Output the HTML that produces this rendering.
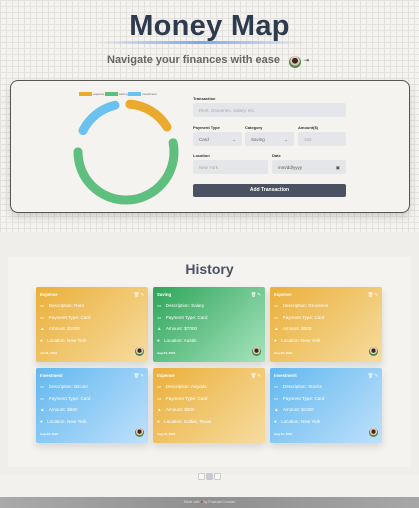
<!DOCTYPE html>
<html><head><style>
*{box-sizing:border-box;margin:0;padding:0}
body{width:419px;height:508px;overflow:hidden;font-family:"Liberation Sans",sans-serif;background:#f2f1ee;position:relative}
.grid{position:absolute;left:0;top:0;width:419px;height:232px;background-color:#f4f3ef;background-image:linear-gradient(#e4e2de 1px,transparent 1px),linear-gradient(90deg,#e4e2de 1px,transparent 1px);background-size:6px 6px}
h1{position:absolute;top:10px;left:0;width:419px;text-align:center;font-size:29px;color:#2e3a4d;font-weight:bold;letter-spacing:0.3px}
.glow{position:absolute;left:95px;top:41px;width:210px;height:3px;border-radius:2px;background:linear-gradient(90deg,transparent,#7aa8ee,transparent)}
.sub{position:absolute;top:54px;left:107px;font-size:11px;font-weight:bold;color:#666;white-space:nowrap}
.av{position:absolute;width:12px;height:12px;border-radius:50%;background:radial-gradient(circle at 50% 40%,#3a2a22 30%,#e9c9b5 32%,#e9c9b5 50%,#4e8a4c 52%)}
.main{position:absolute;left:10px;top:80px;width:400px;height:133px;border:1px solid #555;border-radius:8px;background:#f4f3f0;box-shadow:0 4px 8px rgba(0,0,0,.15)}
.lbl{position:absolute;font-size:4px;font-weight:bold;color:#333}
.inp{position:absolute;background:#e5e6e9;border-radius:2px;font-size:4.5px;color:#aaa;padding:5px 6px}
.btn{position:absolute;left:193px;top:184px;width:153px;height:13px;background:#4a5261;border-radius:2px;color:#fff;font-size:5px;font-weight:bold;text-align:center;line-height:13px}
.hist{position:absolute;left:0;top:232px;width:419px;height:243px;background:#efeeeb}
.panel{position:absolute;left:8px;top:257px;width:403px;height:210px;background:#f4f3f0}
h2{position:absolute;top:261px;left:0;width:419px;text-align:center;font-size:14px;color:#4a5261}
.card{position:absolute;width:112px;height:75px;border-radius:2px;color:#fff;font-size:4.3px;box-shadow:0 4px 8px rgba(0,0,0,.12)}
.exp{background:linear-gradient(135deg,#ebaf3a,#f6dca0)}
.sav{background:linear-gradient(135deg,#2ea55a,#a7e3bd)}
.inv{background:linear-gradient(135deg,#62b8ef,#bfe0fb)}
.card .t{position:absolute;left:4px;top:5px;font-weight:bold}
.card .ic{position:absolute;right:4px;top:5px}
.card .r{position:absolute;left:4px;font-size:4.6px}
.card .r b{margin-left:3px;font-weight:normal}
.card .d{position:absolute;left:4px;top:64px;font-size:3px;font-weight:bold}
.card .av{left:99px;top:60px;width:9px;height:9px}
.pg{position:absolute;top:473px;width:7px;height:7px;border:1px solid #ccc;border-radius:1px;background:#f7f7f7}
.foot{position:absolute;left:0;top:497px;width:419px;height:11px;background:linear-gradient(90deg,#aaa,#8f8f8f,#a7a7a7);font-size:3.5px;color:#ddd;text-align:center;line-height:11px}
</style></head><body>
<div class="grid"></div>
<div class="glow"></div>
<h1>Money Map</h1>
<div class="sub">Navigate your finances with ease</div>
<div class="av" style="left:289px;top:56px"></div>
<div style="position:absolute;left:304px;top:57px;font-size:6px;color:#444">⇥</div>
<div class="main"></div>
<div style="position:absolute;left:79px;top:92px;font-size:3px;color:#666;white-space:nowrap"><span style="display:inline-block;width:13px;height:4px;background:#ebaa2e;vertical-align:middle"></span> expense <span style="display:inline-block;width:13px;height:4px;background:#5fbf7f;vertical-align:middle"></span> saving <span style="display:inline-block;width:13px;height:4px;background:#6cc2ef;vertical-align:middle"></span> investment</div>
<svg style="position:absolute;left:70px;top:96px" width="112" height="112" viewBox="0 0 112 112">
<g fill="none" stroke-width="9" stroke-linecap="round" transform="rotate(-90 56 56)">
<circle cx="56" cy="56" r="48" stroke="#ebaa2e" stroke-dasharray="45 257" stroke-dashoffset="-4"/>
<circle cx="56" cy="56" r="48" stroke="#5fbf7f" stroke-dasharray="160 142" stroke-dashoffset="-66"/>
<circle cx="56" cy="56" r="48" stroke="#6cc2ef" stroke-dasharray="42 260" stroke-dashoffset="-248"/>
</g></svg>
<div class="lbl" style="left:193px;top:96px">Transaction</div>
<div class="inp" style="left:193px;top:103px;width:153px;height:14px">Rent, Groceries, Salary, etc.</div>
<div class="lbl" style="left:193px;top:125px">Payment Type</div>
<div class="lbl" style="left:245px;top:125px">Category</div>
<div class="lbl" style="left:298px;top:125px">Amount($)</div>
<div class="inp" style="left:193px;top:132px;width:49px;height:14px;color:#666">Card<span style="float:right">⌄</span></div>
<div class="inp" style="left:245px;top:132px;width:49px;height:14px;color:#666">Saving<span style="float:right">⌄</span></div>
<div class="inp" style="left:298px;top:132px;width:48px;height:14px">150</div>
<div class="lbl" style="left:193px;top:153px">Location</div>
<div class="lbl" style="left:272px;top:153px">Date</div>
<div class="inp" style="left:193px;top:160px;width:75px;height:14px">New York</div>
<div class="inp" style="left:272px;top:160px;width:74px;height:14px;color:#555">mm/dd/yyyy<span style="float:right">▣</span></div>
<div class="btn">Add Transaction</div>
<div class="hist"></div>
<div class="panel"></div>
<h2>History</h2>

<div class="card exp" style="left:36px;top:287px"><div class="t">Expense</div><div class="ic">🗑 ✎</div><div class="r" style="top:16px">▭ <b>Description:</b> Rent</div><div class="r" style="top:28px">▭ <b>Payment Type:</b> Card</div><div class="r" style="top:39px">▲ <b>Amount:</b> $1000</div><div class="r" style="top:51px">● <b>Location:</b> New York</div><div class="d">Jul 31, 2024</div><div class="av"></div></div>
<div class="card sav" style="left:153px;top:287px"><div class="t">Saving</div><div class="ic">🗑 ✎</div><div class="r" style="top:16px">▭ <b>Description:</b> Salary</div><div class="r" style="top:28px">▭ <b>Payment Type:</b> Card</div><div class="r" style="top:39px">▲ <b>Amount:</b> $7000</div><div class="r" style="top:51px">● <b>Location:</b> Austin</div><div class="d">Aug 04, 2024</div><div class="av"></div></div>
<div class="card exp" style="left:270px;top:287px"><div class="t">Expense</div><div class="ic">🗑 ✎</div><div class="r" style="top:16px">▭ <b>Description:</b> Groceries</div><div class="r" style="top:28px">▭ <b>Payment Type:</b> Card</div><div class="r" style="top:39px">▲ <b>Amount:</b> $300</div><div class="r" style="top:51px">● <b>Location:</b> New York</div><div class="d">Aug 05, 2024</div><div class="av"></div></div>
<div class="card inv" style="left:36px;top:368px"><div class="t">Investment</div><div class="ic">🗑 ✎</div><div class="r" style="top:16px">▭ <b>Description:</b> Bitcoin</div><div class="r" style="top:28px">▭ <b>Payment Type:</b> Card</div><div class="r" style="top:39px">▲ <b>Amount:</b> $980</div><div class="r" style="top:51px">● <b>Location:</b> New York</div><div class="d">Aug 03, 2024</div><div class="av"></div></div>
<div class="card exp" style="left:153px;top:368px"><div class="t">Expense</div><div class="ic">🗑 ✎</div><div class="r" style="top:16px">▭ <b>Description:</b> Airpods</div><div class="r" style="top:28px">▭ <b>Payment Type:</b> Card</div><div class="r" style="top:39px">▲ <b>Amount:</b> $500</div><div class="r" style="top:51px">● <b>Location:</b> Dallas, Texas</div><div class="d">Aug 10, 2024</div></div>
<div class="card inv" style="left:270px;top:368px"><div class="t">Investment</div><div class="ic">🗑 ✎</div><div class="r" style="top:16px">▭ <b>Description:</b> Stocks</div><div class="r" style="top:28px">▭ <b>Payment Type:</b> Card</div><div class="r" style="top:39px">▲ <b>Amount:</b> $1000</div><div class="r" style="top:51px">● <b>Location:</b> New York</div><div class="d">Aug 12, 2024</div><div class="av"></div></div>

<div class="pg" style="left:198px"></div>
<div class="pg" style="left:206px;background:#c7cbd8"></div>
<div class="pg" style="left:214px"></div>
<div class="foot">Made with <span style="color:#e33">■</span> by Prashant Kandari</div>
</body></html>
